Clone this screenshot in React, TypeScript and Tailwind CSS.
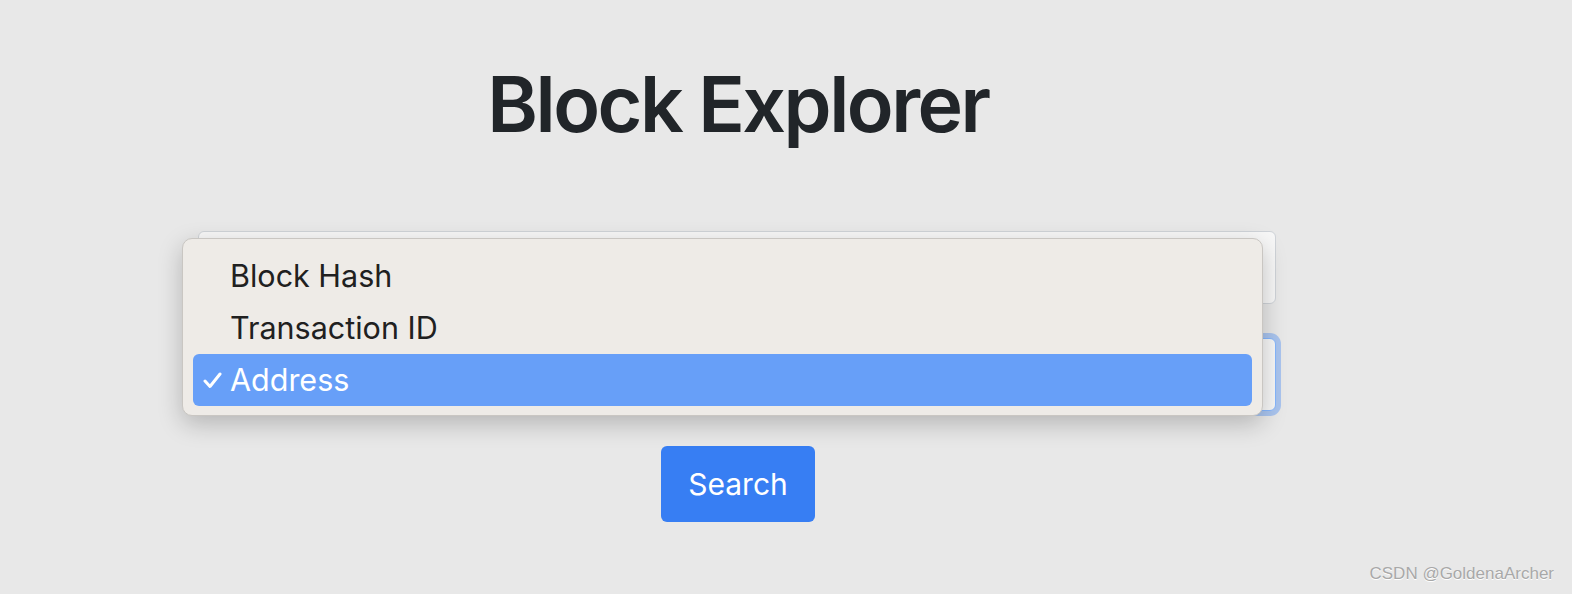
import { useState } from "react";

const OPTIONS = ["Block Hash", "Transaction ID", "Address"];

export default function App() {
  const [selected] = useState("Address");

  return (
    <div
      className="min-h-[594px] w-full bg-[#e8e8e8] relative"
      style={{ fontFamily: "Inter, 'Noto Sans', sans-serif" }}
    >
      <div className="ml-[198px] w-[1078px] flex flex-col items-center pt-[57px]">
        <h1 className="text-[77px] leading-[94px] font-semibold text-[#212529] tracking-[-2.5px] pl-[2px]">
          Block Explorer
        </h1>

        <div className="w-full mt-[80px] flex flex-col">
          <input
            className="w-full h-[73px] rounded-[6px] border border-[#cfd3d8] bg-[#f7f7f7] px-4 text-[28px] outline-none"
            readOnly
          />

          <div className="relative mt-[34px]">
            <div className="h-[73px] rounded-[6px] border border-[#86b7fe] bg-[#f7f7f7] ring-[5px] ring-[#a9c4ee] flex items-center justify-end pr-[14px]">
              <svg width="16" height="10" viewBox="0 0 16 10" fill="none">
                <path d="M2 2l6 6 6-6" stroke="#343a40" strokeWidth="2" strokeLinecap="round" strokeLinejoin="round" />
              </svg>
            </div>

            {/* native menu open over the select */}
            <div className="absolute left-[-16px] top-[-100px] w-[1081px] rounded-[10px] border border-[#c9c6c2] bg-[#eeebe7] shadow-[0_8px_24px_rgba(0,0,0,0.22)] pt-[11px] pb-[9px] px-[10px]">
              {OPTIONS.map((o) => {
                const on = o === selected;
                return (
                  <div
                    key={o}
                    className={
                      "h-[52px] rounded-[6px] flex items-center text-[30.5px] " +
                      (on ? "bg-[#679ff8] text-white" : "text-[#202020]")
                    }
                  >
                    <span className="w-[37px] flex justify-center pl-[2px]">
                      {on && (
                        <svg width="19" height="17" viewBox="0 0 19 17" fill="none">
                          <path d="M2 9l5 5.5L17 2" stroke="white" strokeWidth="3" strokeLinecap="round" strokeLinejoin="round" />
                        </svg>
                      )}
                    </span>
                    <span>{o}</span>
                  </div>
                );
              })}
            </div>
          </div>

          <button className="self-start ml-[463px] mt-[35px] w-[154px] h-[76px] rounded-[6px] bg-[#377ef3] text-white text-[30px]">
            Search
          </button>
        </div>
      </div>

      <div
        className="absolute right-[18px] bottom-[8px] text-[17px] text-[#a8a8a8]"
        style={{ fontFamily: "'Liberation Sans', Arial, sans-serif", textShadow: "0 1px 0 #fff" }}
      >
        CSDN @GoldenaArcher
      </div>
    </div>
  );
}
